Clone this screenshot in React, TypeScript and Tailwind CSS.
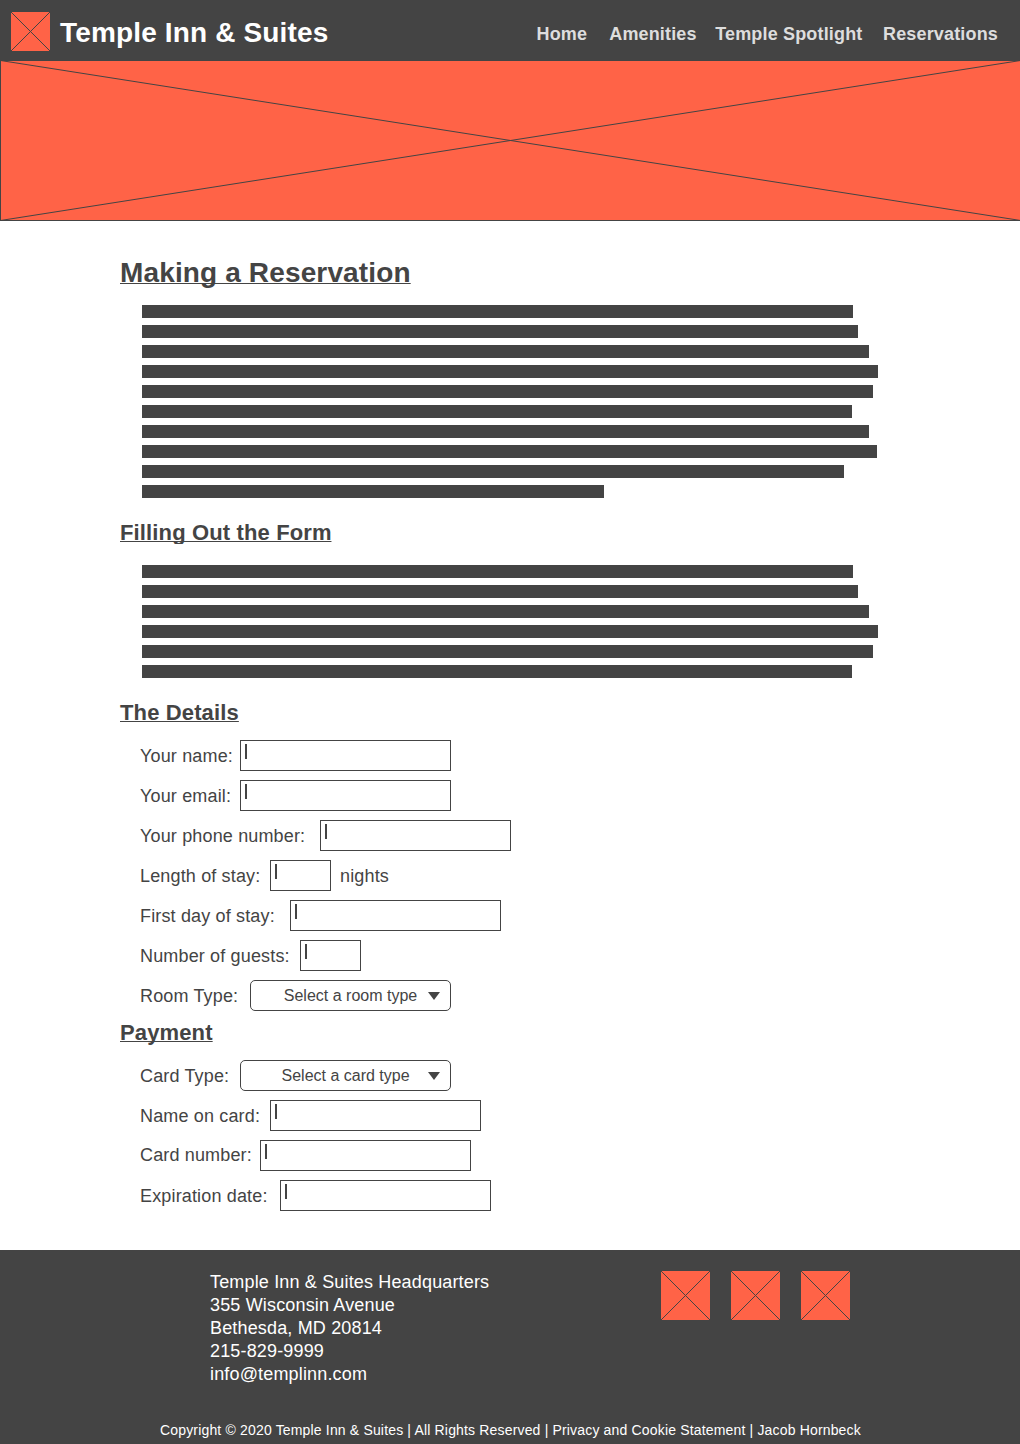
import { ReactNode } from "react";

function Crossed({ className, w, h }: { className: string; w: number; h: number }) {
  return (
    <svg className={className} viewBox={`0 0 ${w} ${h}`} fill="none" stroke="#444444" strokeWidth="1">
      <rect x="0.5" y="0.5" width={w - 1} height={h - 1} fill="#ff6347" />
      <path d={`M0.5 0.5L${w - 0.5} ${h - 0.5}M${w - 0.5} 0.5L0.5 ${h - 0.5}`} />
    </svg>
  );
}

function Bars({ widths }: { widths: string[] }) {
  return (
    <div className="ml-[22px] flex flex-col gap-[7px]">
      {widths.map((w, i) => (
        <div key={i} className={`h-[13px] bg-[#444444] ${w}`} />
      ))}
    </div>
  );
}

function Row({ label, labelWidth, children, lift = false }: { label: string; labelWidth: string; children: ReactNode; lift?: boolean }) {
  return (
    <div className="flex h-10 items-start pl-5 text-[18px] leading-[31px] tracking-[0.155px]">
      <label className={`shrink-0 whitespace-nowrap ${labelWidth} ${lift ? "" : "pt-px"}`}>{label}</label>
      {children}
    </div>
  );
}

function Field({ width }: { width: string }) {
  return (
    <div className={`h-[31px] shrink-0 border border-[#444444] bg-white pt-[3px] pl-1 ${width}`}>
      <div className="h-[15px] w-[2px] bg-[#444444]" />
    </div>
  );
}

function Select({ width, pad, children }: { width: string; pad: string; children: string }) {
  return (
    <div className={`flex h-[31px] shrink-0 items-center justify-between rounded-[5px] border border-[#444444] bg-white pr-[10px] text-[16px] leading-[29px] tracking-normal ${width} ${pad}`}>
      <span className="whitespace-nowrap">{children}</span>
      <svg className="h-2 w-3" viewBox="0 0 12 8" fill="#444444">
        <path d="M0 0H12L6 8Z" />
      </svg>
    </div>
  );
}

const h2 = "w-fit text-[22px] leading-[26px] font-bold tracking-[0.135px] underline decoration-1 underline-offset-[1px] [text-decoration-skip-ink:none]";

export default function App() {
  return (
    <div className="flex h-[1444px] w-[1020px] flex-col overflow-hidden bg-white font-['Liberation_Sans',Arial,sans-serif] text-[#444444]">
      <header className="flex h-[60px] shrink-0 items-start bg-[#444444]">
        <Crossed className="mt-[11px] ml-[10px] h-[41px] w-[41px]" w={41} h={41} />
        <h1 className="mt-[17px] ml-[9px] text-[28px] leading-8 font-bold tracking-[0.15px] whitespace-nowrap text-white">Temple Inn &amp; Suites</h1>
        <nav className="mt-6 mr-[22px] ml-auto flex text-[18px] leading-[21px] font-bold tracking-[0.16px] whitespace-nowrap text-[#dddddd]">
          <a className="w-[72.7px]">Home</a>
          <a className="w-[106px]">Amenities</a>
          <a className="w-[167.8px]">Temple Spotlight</a>
          <a>Reservations</a>
        </nav>
      </header>
      <Crossed className="h-[161px] w-[1021px] shrink-0" w={1021} h={161} />
      <main className="flex h-[1029px] shrink-0 flex-col pl-[120px]">
        <h1 className="mt-9 mb-4 w-fit text-[28px] leading-8 font-bold tracking-[0.14px] underline decoration-1 underline-offset-[1px] [text-decoration-skip-ink:none]">Making a Reservation</h1>
        <Bars widths={["w-[711px]", "w-[716px]", "w-[727px]", "w-[736px]", "w-[731px]", "w-[710px]", "w-[727px]", "w-[735px]", "w-[702px]", "w-[462px]"]} />
        <h2 className={`mt-[22px] mb-[19px] [clip-path:inset(0_0_2px_0)] ${h2}`}>Filling Out the Form</h2>
        <Bars widths={["w-[711px]", "w-[716px]", "w-[727px]", "w-[736px]", "w-[731px]", "w-[710px]"]} />
        <h2 className={`mt-[22px] mb-[14px] ${h2}`}>The Details</h2>
        <Row label="Your name:" labelWidth="w-[100px]"><Field width="w-[211px]" /></Row>
        <Row label="Your email:" labelWidth="w-[100px]"><Field width="w-[211px]" /></Row>
        <Row label="Your phone number:" labelWidth="w-[180px]"><Field width="w-[191px]" /></Row>
        <Row label="Length of stay:" labelWidth="w-[130px]">
          <Field width="w-[61px]" />
          <span className="ml-[9px] pt-px">nights</span>
        </Row>
        <Row label="First day of stay:" labelWidth="w-[150px]"><Field width="w-[211px]" /></Row>
        <Row label="Number of guests:" labelWidth="w-[160px]"><Field width="w-[61px]" /></Row>
        <Row label="Room Type:" labelWidth="w-[110px]"><Select width="w-[201px]" pad="pl-[32.8px]">Select a room type</Select></Row>
        <h2 className={`mb-[14px] ${h2}`}>Payment</h2>
        <Row label="Card Type:" labelWidth="w-[100px]"><Select width="w-[211px]" pad="pl-[40.5px]">Select a card type</Select></Row>
        <Row label="Name on card:" labelWidth="w-[130px]"><Field width="w-[211px]" /></Row>
        <Row label="Card number:" labelWidth="w-[120px]" lift><Field width="w-[211px]" /></Row>
        <Row label="Expiration date:" labelWidth="w-[140px]"><Field width="w-[211px]" /></Row>
      </main>
      <footer className="flex h-[194px] shrink-0 flex-col bg-[#444444] text-white">
        <div className="flex h-[150px] pt-5 pl-[210px]">
          <address className="w-[450px] pt-px text-[18px] leading-[23px] tracking-[0.16px] whitespace-nowrap not-italic">
            <p>Temple Inn &amp; Suites Headquarters</p>
            <p>355 Wisconsin Avenue</p>
            <p>Bethesda, MD 20814</p>
            <p>215-829-9999</p>
            <p>info@templinn.com</p>
          </address>
          <div className="flex gap-[19px]">
            <Crossed className="h-[51px] w-[51px]" w={51} h={51} />
            <Crossed className="h-[51px] w-[51px]" w={51} h={51} />
            <Crossed className="h-[51px] w-[51px]" w={51} h={51} />
          </div>
        </div>
        <p className="mt-[22px] ml-[160px] text-[14px] leading-4 tracking-[0.167px] whitespace-nowrap">
          Copyright © 2020 Temple Inn &amp; Suites | All Rights Reserved | Privacy and Cookie Statement | Jacob Hornbeck
        </p>
      </footer>
    </div>
  );
}
